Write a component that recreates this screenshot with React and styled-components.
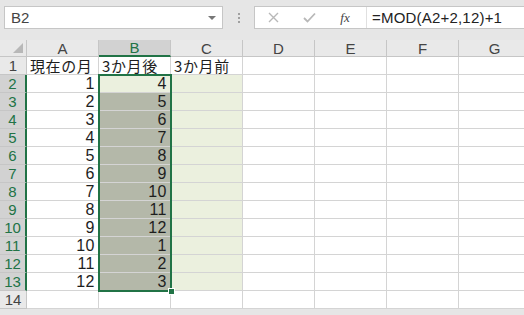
import React from "react";
import styled, { createGlobalStyle, css } from "styled-components";

const GREEN = "#217346";
const COLS = ["A", "B", "C", "D", "E", "F", "G"];
const DATA = [
  ["現在の月", "3か月後", "3か月前"],
  [1, 4], [2, 5], [3, 6], [4, 7], [5, 8], [6, 9],
  [7, 10], [8, 11], [9, 12], [10, 1], [11, 2], [12, 3],
  [],
];

const Global = createGlobalStyle`
  html, body { margin: 0; padding: 0; background: #fff; }
  body {
    width: 524px;
    height: 315px;
    overflow: hidden;
    font-family: "Noto Sans CJK JP", "Liberation Sans", sans-serif;
  }
`;

const Page = styled.div`
  width: 524px;
  height: 315px;
  overflow: hidden;
  background: #e6e6e6;
`;

const FormulaBar = styled.div`
  height: 40px;
  display: flex;
  align-items: flex-start;
  padding: 6px 0 0 4px;
  box-sizing: border-box;
`;

const NameBox = styled.div`
  width: 219px;
  height: 23px;
  box-sizing: border-box;
  background: #fff;
  border: 1px solid #c6c6c6;
  display: flex;
  align-items: center;
  justify-content: space-between;
  padding: 0 6px 0 6px;
  font-family: "Liberation Sans", sans-serif;
  font-size: 15px;
  line-height: 21px;
  color: #444;
`;

const Arrow = styled.span`
  width: 0;
  height: 0;
  border-left: 4px solid transparent;
  border-right: 4px solid transparent;
  border-top: 4px solid #777;
`;

const Grip = styled.div`
  width: 31px;
  height: 23px;
  display: flex;
  flex-direction: column;
  align-items: center;
  justify-content: center;
  gap: 2px;
  span {
    width: 2px;
    height: 2px;
    background: #a0a0a0;
  }
`;

const FormulaBox = styled.div`
  flex: 1;
  height: 23px;
  box-sizing: border-box;
  background: #fff;
  border: 1px solid #c6c6c6;
  border-right: none;
  display: flex;
  align-items: center;
`;

const ToolIcon = styled.div`
  width: 36px;
  height: 21px;
  display: flex;
  align-items: center;
  justify-content: center;
`;

const Fx = styled.span`
  font-family: "Liberation Serif", serif;
  font-style: italic;
  font-size: 13px;
  line-height: 21px;
  color: #444;
`;

const Divider = styled.span`
  width: 1px;
  height: 21px;
  background: #e0e0e0;
  margin: 0 5px 0 3px;
`;

const FormulaText = styled.span`
  font-family: "Liberation Sans", sans-serif;
  font-size: 15px;
  line-height: 21px;
  color: #222;
  letter-spacing: 0.2px;
`;

const SheetWrap = styled.div`
  position: relative;
  background: #fff;
`;

const Grid = styled.div`
  display: grid;
  grid-template-columns: 27px repeat(7, 72px);
  grid-template-rows: 17px repeat(14, 18px);
`;

const Corner = styled.div`
  background: #e9e9e9;
  border-right: 1px solid #c6c6c6;
  border-bottom: 1px solid #c6c6c6;
  position: relative;
  &::after {
    content: "";
    position: absolute;
    right: 3px;
    bottom: 3px;
    border-left: 10px solid transparent;
    border-bottom: 10px solid #b8b8b8;
  }
`;

const Head = css`
  box-sizing: border-box;
  background: #e9e9e9;
  border-right: 1px solid #c6c6c6;
  border-bottom: 1px solid #c6c6c6;
  display: flex;
  align-items: center;
  justify-content: center;
  font-family: "Liberation Sans", sans-serif;
  font-size: 15px;
  line-height: 17px;
  color: #444;
`;

const ColHead = styled.div`
  ${Head}
  ${({ $active }) =>
    $active &&
    css`
      background: #d2d2d2;
      color: ${GREEN};
      border-bottom: 2px solid ${GREEN};
    `}
`;

const RowHead = styled.div`
  ${Head}
  ${({ $active }) =>
    $active &&
    css`
      background: #d2d2d2;
      color: ${GREEN};
      border-right: 2px solid ${GREEN};
    `}
`;

const Cell = styled.div`
  box-sizing: border-box;
  border-right: 1px solid #d4d4d4;
  border-bottom: 1px solid #d4d4d4;
  display: flex;
  align-items: center;
  justify-content: ${({ $num }) => ($num ? "flex-end" : "flex-start")};
  padding: 0 3px;
  font-family: ${({ $num }) =>
    $num ? '"Liberation Sans", sans-serif' : '"Noto Sans CJK JP", sans-serif'};
  font-size: ${({ $num }) => ($num ? "16px" : "15px")};
  line-height: 17px;
  color: #1e1e1e;
  white-space: nowrap;
  letter-spacing: ${({ $num }) => ($num ? "0.5px" : "0.6px")};
  background: ${({ $fill }) => $fill || "#fff"};
`;

const Selection = styled.div`
  position: absolute;
  left: 98px;
  top: 34px;
  width: 74px;
  height: 218px;
  box-sizing: border-box;
  border: 2px solid ${GREEN};
  pointer-events: none;
  &::after {
    content: "";
    position: absolute;
    right: -5px;
    bottom: -5px;
    width: 5px;
    height: 5px;
    background: ${GREEN};
    border: 1px solid #fff;
  }
`;

function cellFill(r, c) {
  if (r < 1 || r > 12) return null;
  if (c === 1) return r === 1 ? "#ebf0de" : "#b4b8a9";
  if (c === 2) return "#ebf0de";
  return null;
}

export default function App() {
  return (
    <Page>
      <Global />
      <FormulaBar>
        <NameBox>
          B2
          <Arrow />
        </NameBox>
        <Grip>
          <span />
          <span />
          <span />
        </Grip>
        <FormulaBox>
          <ToolIcon>
            <svg width="11" height="11" viewBox="0 0 11 11">
              <path d="M1 1L10 10M10 1L1 10" stroke="#b8b8b8" strokeWidth="1.4" />
            </svg>
          </ToolIcon>
          <ToolIcon>
            <svg width="13" height="11" viewBox="0 0 13 11">
              <path d="M1 6L4.5 9.5L12 1.5" stroke="#b8b8b8" strokeWidth="1.8" fill="none" />
            </svg>
          </ToolIcon>
          <ToolIcon>
            <Fx>fx</Fx>
          </ToolIcon>
          <Divider />
          <FormulaText>=MOD(A2+2,12)+1</FormulaText>
        </FormulaBox>
      </FormulaBar>
      <SheetWrap>
        <Grid>
          <Corner />
          {COLS.map((c) => (
            <ColHead key={c} $active={c === "B"}>
              {c}
            </ColHead>
          ))}
          {DATA.map((row, r) => (
            <React.Fragment key={r}>
              <RowHead $active={r >= 1 && r <= 12}>{r + 1}</RowHead>
              {COLS.map((c, ci) => {
                const v = row[ci];
                return (
                  <Cell key={c} $num={typeof v === "number"} $fill={cellFill(r, ci)}>
                    {v}
                  </Cell>
                );
              })}
            </React.Fragment>
          ))}
        </Grid>
        <Selection />
      </SheetWrap>
    </Page>
  );
}
